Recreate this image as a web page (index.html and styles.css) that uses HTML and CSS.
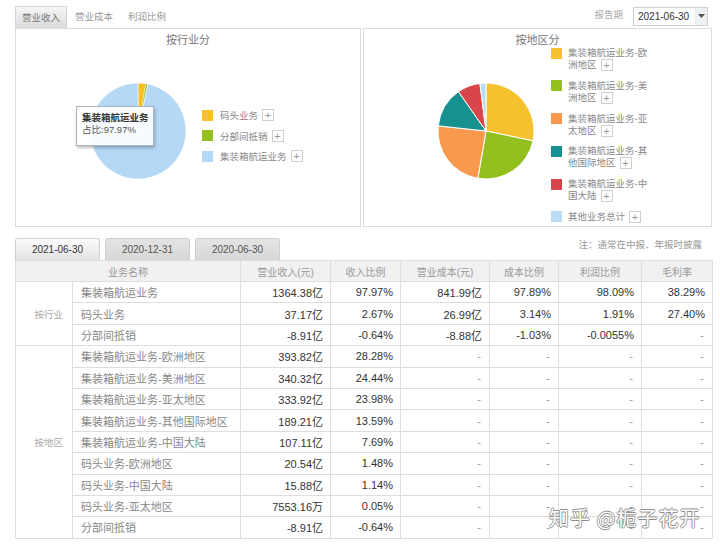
FILE: index.html
```html
<!DOCTYPE html>
<html lang="zh">
<head>
<meta charset="utf-8">
<title>营业收入</title>
<link rel="stylesheet" href="styles.css">
</head>
<body>
<div class="page">
  <div class="topbar">
    <div class="tabs">
      <span class="tab active">营业收入</span>
      <span class="tab">营业成本</span>
      <span class="tab">利润比例</span>
    </div>
    <div class="period">
      <span class="period-label">报告期</span>
      <div class="select">
        <span class="select-val">2021-06-30</span>
        <span class="select-btn"><svg width="7" height="4" viewBox="0 0 7 4"><path d="M0 0H7L3.5 4Z" fill="#555"/></svg></span>
      </div>
    </div>
  </div>

  <div class="charts">
    <div class="panel panel-left">
      <div class="chart-title">按行业分</div>
      <div class="pie-row">
        <svg class="pie" width="98" height="98" viewBox="-49 -49 98 98">
          <path d="M0 0L0 -48A48 48 0 0 1 7.92 -47.34Z" fill="#f5c125" stroke="#fff" stroke-width="0.6"/>
          <path d="M0 0L7.92 -47.34A48 48 0 0 1 9.82 -46.98Z" fill="#8fbd1c" stroke="#fff" stroke-width="0.3"/>
          <path d="M0 0L9.82 -46.98A48 48 0 1 1 0 -48Z" fill="#b4d8f6" stroke="#fff" stroke-width="0.6"/>
        </svg>
        <div class="legend-l">
          <div class="li"><span class="sw sw-yellow"></span><span>码头业务</span><span class="plus">+</span></div>
          <div class="li"><span class="sw sw-green"></span><span>分部间抵销</span><span class="plus">+</span></div>
          <div class="li"><span class="sw sw-blue"></span><span>集装箱航运业务</span><span class="plus">+</span></div>
        </div>
      </div>
      <div class="tooltip">
        <div class="tt-title">集装箱航运业务</div>
        <div class="tt-val">占比:97.97%</div>
      </div>
    </div>

    <div class="panel panel-right">
      <div class="chart-title">按地区分</div>
      <svg class="pie" width="98" height="98" viewBox="-49 -49 98 98">
        <path d="M0 0L0 -48A48 48 0 0 1 46.98 9.82Z" fill="#f6c12e" stroke="#fff" stroke-width="1"/>
        <path d="M0 0L46.98 9.82A48 48 0 0 1 -8.16 47.30Z" fill="#93c01f" stroke="#fff" stroke-width="1"/>
        <path d="M0 0L-8.16 47.30A48 48 0 0 1 -47.73 -5.12Z" fill="#f9994e" stroke="#fff" stroke-width="1"/>
        <path d="M0 0L-47.73 -5.12A48 48 0 0 1 -27.51 -39.33Z" fill="#17918f" stroke="#fff" stroke-width="1"/>
        <path d="M0 0L-27.51 -39.33A48 48 0 0 1 -6.07 -47.61Z" fill="#d8464b" stroke="#fff" stroke-width="1"/>
        <path d="M0 0L-6.07 -47.61A48 48 0 0 1 0 -48Z" fill="#bcdcf4" stroke="#fff" stroke-width="1"/>
      </svg>
      <div class="legend-r">
        <div class="li2"><span class="sw sw-yellow"></span><span class="lt">集装箱航运业务-欧<br>洲地区<span class="plus">+</span></span></div>
        <div class="li2"><span class="sw sw-green"></span><span class="lt">集装箱航运业务-美<br>洲地区<span class="plus">+</span></span></div>
        <div class="li2"><span class="sw sw-orange"></span><span class="lt">集装箱航运业务-亚<br>太地区<span class="plus">+</span></span></div>
        <div class="li2"><span class="sw sw-teal"></span><span class="lt">集装箱航运业务-其<br>他国际地区<span class="plus">+</span></span></div>
        <div class="li2"><span class="sw sw-red"></span><span class="lt">集装箱航运业务-中<br>国大陆<span class="plus">+</span></span></div>
        <div class="li2"><span class="sw sw-lblue"></span><span class="lt">其他业务总计<span class="plus">+</span></span></div>
      </div>
    </div>
  </div>

  <div class="subbar">
    <div class="datetabs">
      <span class="dtab active">2021-06-30</span>
      <span class="dtab">2020-12-31</span>
      <span class="dtab">2020-06-30</span>
    </div>
    <div class="note">注：通常在中报、年报时披露</div>
  </div>

  <table class="grid">
    <colgroup>
      <col class="c-group"><col class="c-name"><col class="c-rev"><col class="c-ratio"><col class="c-cost"><col class="c-cratio"><col class="c-profit"><col class="c-margin">
    </colgroup>
    <thead>
      <tr>
        <th colspan="2">业务名称</th>
        <th>营业收入(元)</th>
        <th>收入比例</th>
        <th>营业成本(元)</th>
        <th>成本比例</th>
        <th>利润比例</th>
        <th>毛利率</th>
      </tr>
    </thead>
    <tbody>
      <tr>
        <td class="grp" rowspan="3">按行业</td>
        <td class="name">集装箱航运业务</td><td class="num">1364.38亿</td><td class="num">97.97%</td><td class="num">841.99亿</td><td class="num">97.89%</td><td class="num">98.09%</td><td class="num">38.29%</td>
      </tr>
      <tr>
        <td class="name">码头业务</td><td class="num">37.17亿</td><td class="num">2.67%</td><td class="num">26.99亿</td><td class="num">3.14%</td><td class="num">1.91%</td><td class="num">27.40%</td>
      </tr>
      <tr>
        <td class="name">分部间抵销</td><td class="num">-8.91亿</td><td class="num">-0.64%</td><td class="num">-8.88亿</td><td class="num">-1.03%</td><td class="num">-0.0055%</td><td class="dash">-</td>
      </tr>
      <tr>
        <td class="grp" rowspan="9">按地区</td>
        <td class="name">集装箱航运业务-欧洲地区</td><td class="num">393.82亿</td><td class="num">28.28%</td><td class="dash">-</td><td class="dash">-</td><td class="dash">-</td><td class="dash">-</td>
      </tr>
      <tr>
        <td class="name">集装箱航运业务-美洲地区</td><td class="num">340.32亿</td><td class="num">24.44%</td><td class="dash">-</td><td class="dash">-</td><td class="dash">-</td><td class="dash">-</td>
      </tr>
      <tr>
        <td class="name">集装箱航运业务-亚太地区</td><td class="num">333.92亿</td><td class="num">23.98%</td><td class="dash">-</td><td class="dash">-</td><td class="dash">-</td><td class="dash">-</td>
      </tr>
      <tr>
        <td class="name">集装箱航运业务-其他国际地区</td><td class="num">189.21亿</td><td class="num">13.59%</td><td class="dash">-</td><td class="dash">-</td><td class="dash">-</td><td class="dash">-</td>
      </tr>
      <tr>
        <td class="name">集装箱航运业务-中国大陆</td><td class="num">107.11亿</td><td class="num">7.69%</td><td class="dash">-</td><td class="dash">-</td><td class="dash">-</td><td class="dash">-</td>
      </tr>
      <tr>
        <td class="name">码头业务-欧洲地区</td><td class="num">20.54亿</td><td class="num">1.48%</td><td class="dash">-</td><td class="dash">-</td><td class="dash">-</td><td class="dash">-</td>
      </tr>
      <tr>
        <td class="name">码头业务-中国大陆</td><td class="num">15.88亿</td><td class="num">1.14%</td><td class="dash">-</td><td class="dash">-</td><td class="dash">-</td><td class="dash">-</td>
      </tr>
      <tr>
        <td class="name">码头业务-亚太地区</td><td class="num">7553.16万</td><td class="num">0.05%</td><td class="dash">-</td><td class="dash">-</td><td class="dash">-</td><td class="dash">-</td>
      </tr>
      <tr>
        <td class="name">分部间抵销</td><td class="num">-8.91亿</td><td class="num">-0.64%</td><td class="dash">-</td><td class="dash">-</td><td class="dash">-</td><td class="dash">-</td>
      </tr>
    </tbody>
  </table>

  <div class="watermark">知乎 @栀子花开</div>
</div>
</body>
</html>
```

FILE: styles.css
```css
* {
  box-sizing: border-box;
  margin: 0;
  padding: 0;
}

body {
  margin: 0;
  background: #fff;
  font-family: "Liberation Sans", "Noto Sans CJK SC", sans-serif;
  color: #333;
}

.page {
  position: relative;
  width: 720px;
  height: 549px;
  padding: 0 8px 0 15px;
  overflow: hidden;
}

/* ---------- top bar ---------- */
.topbar {
  height: 28px;
  display: flex;
  justify-content: space-between;
}

.tabs {
  display: flex;
  align-items: flex-end;
}

.tab {
  height: 22px;
  line-height: 21px;
  padding: 0 7px;
  margin-right: 1px;
  font-size: 9.5px;
  color: #999;
}

.tab.active {
  padding: 0 6px;
  color: #777;
  background: linear-gradient(#f6f6f6, #dadada);
  border: 1px solid #d6d6d6;
  border-bottom: none;
}

.period {
  display: flex;
  align-items: center;
}

.period-label {
  font-size: 9.5px;
  color: #aaa;
  margin-right: 10px;
}

.select {
  width: 75px;
  height: 19px;
  margin-right: 4px;
  margin-top: 4px;
  display: flex;
  border: 1px solid #d0d0d0;
  background: #fff;
}

.select-val {
  flex: 1;
  font-size: 10px;
  line-height: 17px;
  padding-left: 4px;
  color: #333;
}

.select-btn {
  width: 12px;
  display: flex;
  align-items: center;
  justify-content: center;
  background: #eef1f4;
}

/* ---------- charts ---------- */
.charts {
  display: flex;
  gap: 2px;
  height: 199px;
}

.panel {
  border: 1px solid #dcdcdc;
  position: relative;
}

.panel-left {
  width: 346px;
}

.panel-right {
  flex: 1;
  display: grid;
  grid-template-columns: 187px 1fr;
  grid-template-rows: 20px 1fr;
}

.chart-title {
  text-align: center;
  font-size: 11px;
  color: #777;
  line-height: 18px;
  padding-top: 2px;
}

.pie-row {
  display: flex;
  align-items: flex-start;
}

.pie-row .pie {
  margin: 33px 15px 0 73px;
}

.panel-right .chart-title {
  grid-column: 1 / 3;
  grid-row: 1;
}

.panel-right .pie {
  grid-column: 1;
  grid-row: 2;
  margin: 33px 0 0 73px;
}

.legend-l {
  margin-top: 56px;
}

.li {
  height: 20.5px;
  display: flex;
  align-items: center;
  font-size: 9.5px;
  color: #888;
}

.sw {
  width: 11px;
  height: 11px;
  flex: none;
  margin-right: 7px;
}

.sw-yellow { background: #f6c12e; }
.sw-green { background: #93c01f; }
.sw-blue { background: #b4d8f6; }
.sw-orange { background: #f9994e; }
.sw-teal { background: #17918f; }
.sw-red { background: #d8464b; }
.sw-lblue { background: #bcdcf4; }

.plus {
  display: inline-block;
  width: 12px;
  height: 12px;
  margin-left: 4px;
  border: 1px solid #cfcfcf;
  font-size: 11px;
  line-height: 10px;
  text-align: center;
  color: #999;
  vertical-align: top;
  background: #fff;
}

.legend-r {
  grid-column: 2;
  grid-row: 1 / 3;
  margin-top: 18px;
}

.li2 {
  display: flex;
  align-items: flex-start;
  margin-bottom: 8.8px;
  font-size: 9.5px;
  line-height: 12px;
  color: #888;
}

.li2 .sw {
  margin-top: 0.5px;
  margin-right: 6px;
}

.tooltip {
  position: absolute;
  left: 60px;
  top: 77px;
  width: 78px;
  height: 40px;
  padding: 5px 0 0 5px;
  background: rgba(255, 255, 255, 0.9);
  border: 1px solid #a9b4bf;
  box-shadow: 1px 2px 3px rgba(0, 0, 0, 0.25);
  font-size: 9.5px;
  line-height: 12px;
  color: #333;
}

.tt-title {
  font-weight: bold;
}

.tt-val {
  color: #555;
}

/* ---------- sub bar ---------- */
.subbar {
  height: 33px;
  display: flex;
  justify-content: space-between;
  align-items: flex-end;
}

.datetabs {
  display: flex;
  gap: 5px;
}

.dtab {
  width: 85px;
  height: 22px;
  line-height: 21px;
  text-align: center;
  font-size: 10px;
  color: #555;
  border: 1px solid #cfcfcf;
  border-bottom: none;
  border-radius: 3px 3px 0 0;
  background: linear-gradient(#e4e4e4, #d7d7d7);
}

.dtab.active {
  color: #333;
  background: linear-gradient(#fbfbfb, #e3e3e3);
}

.note {
  align-self: flex-start;
  margin-top: 12px;
  margin-right: 10px;
  font-size: 9.5px;
  line-height: 12px;
  color: #999;
}

/* ---------- table ---------- */
.grid {
  width: 697px;
  border-collapse: collapse;
  table-layout: fixed;
  border: 1px solid #d4d4d4;
}

.c-group { width: 57px; }
.c-name { width: 168px; }
.c-rev { width: 90px; }
.c-ratio { width: 70px; }
.c-cost { width: 89px; }
.c-cratio { width: 69px; }
.c-profit { width: 83px; }
.c-margin { width: 71px; }

.grid th,
.grid td {
  border: 1px solid #dedede;
  padding: 0 7px;
  white-space: nowrap;
}

.grid th {
  height: 21px;
  background: #f1f1f1;
  font-weight: normal;
  font-size: 10px;
  color: #999;
  text-align: center;
}

.grid td {
  height: 21.4px;
  font-size: 11px;
}

.grid td.name {
  color: #888;
  padding-left: 8px;
}

.grid td.num {
  text-align: right;
  color: #333;
}

.grid td.dash {
  text-align: right;
  color: #999;
  padding-right: 8px;
}

.grid td.grp {
  text-align: right;
  padding-right: 9px;
  font-size: 9.5px;
  color: #aaa;
  vertical-align: middle;
}

/* ---------- watermark ---------- */
.watermark {
  position: absolute;
  left: 549px;
  top: 503px;
  font-family: "Noto Sans CJK SC", sans-serif;
  font-size: 20px;
  letter-spacing: 1px;
  color: #fff;
  text-shadow: 0.8px 0 0 #8d8d8d, -0.8px 0 0 #8d8d8d, 0 0.8px 0 #8d8d8d, 0 -0.8px 0 #8d8d8d;
  white-space: nowrap;
}
```
